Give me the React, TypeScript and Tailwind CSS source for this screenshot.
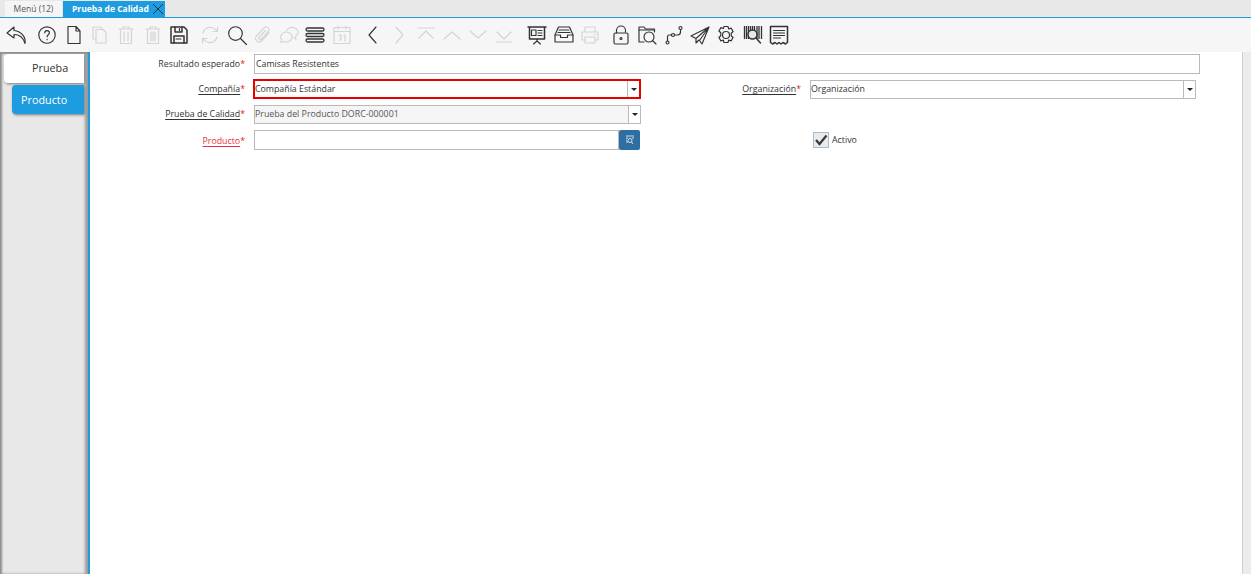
import { ReactNode } from 'react';

const font = "[font-family:'Open_Sans',sans-serif]";

function Ico({ children, off }: { children: ReactNode; off?: boolean }) {
  return (
    <div className={`flex h-[34px] w-[26.3px] items-center justify-center ${off ? 'opacity-[0.17]' : ''}`}>
      <svg width="22" height="22" viewBox="0 0 22 22" fill="none" stroke="#333" strokeWidth="1.150" strokeLinecap="round" strokeLinejoin="round">
        {children}
      </svg>
    </div>
  );
}

const groups: { off?: boolean; d: ReactNode }[][] = [
  [{ d: <path d="M9 3L2 9l7 5V10.500c5 0 9 2 11 9 1-6-3-12-11-13z" /> }],
  [
    { d: <><circle cx="11" cy="11" r="8.200" /><path d="M8.800 8.800c0-3 4.600-3 4.600 0 0 2-2.300 2-2.300 4M11.100 15.200v.5" /></> },
    { d: <path d="M5 2.500h8l4 4.500v12.500H5zM13 2.500V7h4" /> },
    { off: true, d: <><path d="M7 5.500h7l3 3v10.500H7z" /><path d="M7 15H4V3h7l3 2.500" /></> },
    { off: true, d: <><path d="M4 5h14M8 5V3h6v2M5.500 5v14.500h11V5M9 8v9M13 8v9" /></> },
    { off: true, d: <><path d="M4 5h14M8 5V3h6v2M5.500 5v14.500h11V5M9 8v9M11 8v9M13 8v9" /></> },
    { d: <><path d="M3 3h13l3 3v13H3z" strokeWidth="1.500" /><path d="M7 3v5h7V3M6 19v-7h10v7" strokeWidth="1.500" /><path d="M11.500 4.500v2M8 15h5" /></> },
  ],
  [
    { off: true, d: <><path d="M4 9a7.500 7.500 0 0 1 13-3l1.500 1.500M18.500 3v4.500H14" /><path d="M18 13a7.500 7.500 0 0 1-13 3l-1.500-1.500M3.500 19v-4.500H8" /></> },
    { d: <><circle cx="9.500" cy="9.500" r="6.800" /><path d="M14.500 14.500l6 6" /></> },
    { off: true, d: <path d="M17 9l-7.500 8c-3 3-8-1-5-5l8-8.500c2-2 6 1 4 4l-7.500 8c-1 1-3 0-2-2l6.500-7" /> },
    { off: true, d: <><path d="M8.500 6.500a6 5 0 1 1 9 6l.5 2.500-2.500-1" /><path d="M8 8a6 5 0 1 1-2.500 9.500L3 18.500l.5-3A5 5 0 0 1 8 8z" /></> },
    { d: <g strokeWidth="1.300"><rect x="2" y="4" width="18" height="3" rx="1.500" /><rect x="2" y="9.500" width="18" height="3" rx="1.500" /><rect x="2" y="15" width="18" height="3" rx="1.500" /></g> },
    { off: true, d: <><rect x="3" y="3.500" width="16" height="16" /><path d="M3 7.500h16M7 2v3M15 2v3M8 11h2.500l-1.500 2c2 0 2 3.500-.5 3M13 11.500l1-.5v6" /></> },
  ],
  [
    { d: <path d="M14 3l-7 8 7 8" /> },
    { off: true, d: <path d="M8 3l7 8-7 8" /> },
    { off: true, d: <path d="M3 4h16M4 14l7-7 7 7" /> },
    { off: true, d: <path d="M3 15l8-7 8 7" /> },
    { off: true, d: <path d="M3 7l8 7 8-7" /> },
    { off: true, d: <path d="M3 18h16M4 8l7 7 7-7" /> },
  ],
  [
    { d: <><path d="M2 3h18M3.500 3v12h15V3" strokeWidth="1.500" /><path d="M11 15v2M7.500 20l3.500-3 3.500 3" /><rect x="5.500" y="6" width="4.500" height="5.500" /><path d="M12 6.500h4M12 9h4M12 11.500h4" /></> },
    { d: <><path d="M5.500 3h11l3.500 8v7H2v-7z" /><path d="M2 11h5.500v2.500h7V11H20M6 6h10M5 8.500h12" /></> },
    { off: true, d: <><path d="M6 8V3h10v5M6 16H3V8h16v8h-3" /><path d="M6 13h10v6H6zM15.500 10.500h1" /></> },
  ],
  [
    { d: <><path d="M6.500 9V6.500a4.500 4.500 0 0 1 9 0V8" /><rect x="4" y="9" width="14" height="11" rx="1.500" /><circle cx="11" cy="14.500" r="1" /></> },
    { d: <><path d="M18.500 8V5H9.500L8 3H3v15h5" /><path d="M3 6h15.500" /><circle cx="13" cy="13" r="5" /><path d="M16.500 16.500l3.500 3.500" /></> },
    { d: <><circle cx="4.500" cy="18.500" r="1.500" /><circle cx="10" cy="11" r="1.500" /><circle cx="17.500" cy="4" r="1.500" /><path d="M4.500 17v-4.500q0-1.500 1.500-1.500h2.500M11.500 11h3q3 0 3-3V5.500" /></> },
    { d: <path d="M20 3L2 12l5 2.500L20 3l-9.500 13.500 2.500 3.500L20 3zM7 14.500V19l3-3" /> },
    { d: <><path d="M9 2.500h4l.7 2.500 2.400-.9 2 3.400-1.900 1.700v2.600l1.900 1.700-2 3.400-2.400-.9-.7 2.500H9l-.7-2.500-2.400.9-2-3.400 1.900-1.700V8.700L3.900 7l2-3.400 2.400.9z" /><circle cx="11" cy="11" r="3.500" /></> },
    { d: <><path d="M2.500 2v13M4.500 2v13M6.500 2v13M8.500 2v13M10.500 2v13M12.500 2v13M15 2v13M17 2v13M19.500 2v13" stroke="#333" strokeWidth="1.300" strokeLinecap="butt" /><circle cx="10.500" cy="10.500" r="4.500" fill="#e8e8e8" strokeWidth="1.500" /><path d="M14 14l4.500 5" strokeWidth="1.500" /></> },
    { d: <><path d="M2.500 2.500h17v16l-2 1.500-2.500-1.500-2 1.500-2-1.500-2 1.500-2-1.500-2.500 1.500-2-1.500z" strokeWidth="1.500" /><path d="M5.500 6.500h11M5.500 9h11M5.500 11.500h11M5.500 14h7" /></> },
  ],
];

function Req() {
  return <span className="text-[#e02020]">*</span>;
}

function Label({ text, width, underline, red }: { text: string; width: string; underline?: boolean; red?: boolean }) {
  return (
    <div className={`${width} shrink-0 text-right text-[8.800px] ${red ? 'pt-[3px] text-[#e8323c]' : 'pt-[1px] text-[#333]'}`}>
      <span className={underline ? 'underline underline-offset-2' : ''}>{text}</span>
      <Req />
    </div>
  );
}

function Arrow() {
  return <span className="h-0 w-0 border-x-[3.500px] border-t-[3.500px] border-x-transparent border-t-[#222]" />;
}

function Combo({ text, width, focus, off }: { text: string; width: string; focus?: boolean; off?: boolean }) {
  return (
    <div className={`flex ${width} ${focus ? 'h-[20px] border-2 border-[#e60000]' : 'h-[19px] border border-[#b9b9b9]'} ${off ? 'bg-[#f5f5f5] text-[#555]' : 'bg-white text-[#333]'} items-center`}>
      <span className="flex-1 pt-[1px] text-[8.800px]">{text}</span>
      <div className="flex h-full w-[12px] items-center justify-center border-l border-[#b9b9b9] bg-white">
        <Arrow />
      </div>
    </div>
  );
}

export default function App() {
  return (
    <div className={`${font} flex h-[574px] w-[1251px] flex-col overflow-hidden bg-white`}>
      <div className="flex h-[18px] shrink-0 items-end border-b border-[#1d9ce0] bg-[#e8e8e8] pl-[5px]">
        <div className="flex h-[16px] w-[57px] items-center justify-center bg-[#f5f5f5] text-[8.500px] text-[#555]">Menú (12)</div>
        <div className="ml-[1px] flex h-[16px] w-[102px] items-center bg-[#1d9ce0] pl-[9px] text-[8.500px] font-bold text-white">
          Prueba de Calidad
          <svg className="ml-[3px]" width="12" height="12" viewBox="0 0 12 12" stroke="#17374d" strokeWidth="1">
            <path d="M1 1l10 10M11 1L1 11" />
          </svg>
        </div>
      </div>

      <div className="flex h-[34px] shrink-0 items-center gap-[5px] bg-[#f6f6f6] pl-[3px]">
        {groups.map((g, i) => (
          <div key={i} className={`flex ${i === 4 ? 'ml-[1.500px]' : ''}`}>
            {g.map((b, j) => (
              <Ico key={j} off={b.off}>{b.d}</Ico>
            ))}
          </div>
        ))}
      </div>

      <div className="flex min-h-0 flex-1">
        <div className="w-[90px] shrink-0 border-r-2 border-[#1d9ce0] bg-[#e8e8e8] pt-[2px] pl-[4px] shadow-[inset_2px_2px_2px_#8f8f8f,inset_-3px_0_3px_#9a9a9a]">
          <div className="flex h-[29px] w-[80px] items-center rounded-l-[4px] bg-white pl-[28px] text-[10.800px] text-[#333] shadow-[1px_1px_3px_#777]">Prueba</div>
          <div className="mt-[2px] ml-[8px] flex h-[29px] w-[72px] items-center rounded-l-[4px] bg-[#1d9ce0] pt-[1px] pl-[9px] text-[10.800px] text-white shadow-[1px_1px_3px_#777]">Producto</div>
        </div>

        <div className="flex-1 pt-[2px]">
          <div className="flex h-[20px] items-center">
            <Label text="Resultado esperado" width="w-[155px]" />
            <div className="ml-[9px] flex h-[20px] w-[946px] items-center border border-[#b9b9b9] pt-[1px] pl-[1px] text-[8.800px] text-[#333]">Camisas Resistentes</div>
          </div>
          <div className="mt-[5px] flex h-[20px] items-center">
            <Label text="Compañía" width="w-[155px]" underline />
            <div className="ml-[8px]"><Combo text="Compañía Estándar" width="w-[388px]" focus /></div>
            <Label text="Organización" width="w-[160px]" underline />
            <div className="ml-[9px]"><Combo text="Organización" width="w-[386px]" /></div>
          </div>
          <div className="mt-[5px] flex h-[20px] items-center">
            <Label text="Prueba de Calidad" width="w-[155px]" underline />
            <div className="ml-[9px]"><Combo text="Prueba del Producto DORC-000001" width="w-[387px]" off /></div>
          </div>
          <div className="mt-[6px] flex h-[20px] items-center">
            <Label text="Producto" width="w-[155px]" underline red />
            <div className="ml-[9px] h-[20px] w-[365px] border border-[#b9b9b9]" />
            <div className="flex h-[20px] w-[21px] items-center justify-center rounded-[2px] bg-[#2f6ea3]">
              <svg width="10" height="10" viewBox="0 0 10 10" fill="none" stroke="#cfe0ee" strokeWidth="1">
                <path d="M1 1h8M1 3h2M7 3h2M1 5h1M1 7h2" />
                <circle cx="5" cy="5.500" r="2" />
                <path d="M6.500 7L8 9" />
              </svg>
            </div>
            <div className="ml-[173px] flex h-[16px] w-[16px] items-center justify-center border border-[#a9bccd] bg-[#eaeaea]">
              <svg width="14" height="14" viewBox="0 0 14 14" fill="none" stroke="#3a3a3a" strokeWidth="2.200">
                <path d="M2 7l3.500 4L12.500 2.500" />
              </svg>
            </div>
            <span className="ml-[3px] pt-[1px] text-[8.800px] text-[#333]">Activo</span>
          </div>
        </div>

        <div className="w-[9px] shrink-0 border-l border-[#d0d0d0] bg-[#ececec]" />
      </div>
    </div>
  );
}
